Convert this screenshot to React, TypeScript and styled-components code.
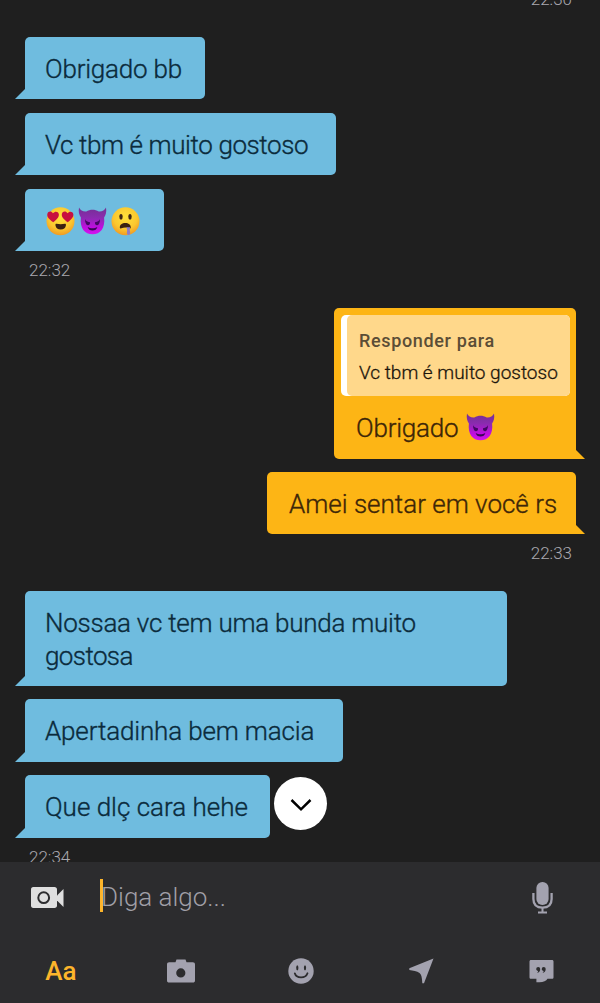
import React from "react";
import styled, { createGlobalStyle } from "styled-components";

const GlobalStyle = createGlobalStyle`
  * { box-sizing: border-box; }
  body {
    margin: 0;
    background: #1f1f1f;
    font-family: Roboto, "Liberation Sans", sans-serif;
  }
`;

const Screen = styled.main`
  display: flex;
  flex-direction: column;
  width: 600px;
  height: 1003px;
  overflow: hidden;
  background: #1f1f1f;
`;

const Conversation = styled.section`
  position: relative;
  display: flex;
  flex-direction: column;
  height: 862px;
  overflow: hidden;
  padding: 0 24px 0 25px;
`;

const Group = styled.div<{ $own?: boolean; $top: number; $gap: number }>`
  display: flex;
  flex-direction: column;
  flex: none;
  align-items: ${(p) => (p.$own ? "flex-end" : "flex-start")};
  gap: ${(p) => p.$gap}px;
  margin-top: ${(p) => p.$top}px;
`;

const Bubble = styled.div<{ $own?: boolean; $width: number; $height?: number }>`
  position: relative;
  display: flex;
  flex-direction: column;
  justify-content: center;
  width: ${(p) => p.$width}px;
  height: ${(p) => p.$height ?? 62}px;
  padding: 0 20px 0 ${(p) => (p.$own ? 22 : 20)}px;
  background: ${(p) => (p.$own ? "#fdb515" : "#6fbcdf")};
  color: ${(p) => (p.$own ? "#3d2608" : "#0b2b3c")};
  border-radius: ${(p) => (p.$own ? "5px 5px 0 5px" : "5px 5px 5px 0")};

  &::after {
    content: "";
    position: absolute;
    bottom: 0;
    ${(p) => (p.$own ? "right: -9px" : "left: -10px")};
    width: 10px;
    height: 10px;
    background: inherit;
    clip-path: ${(p) =>
      p.$own ? "polygon(0 0, 100% 100%, 0 100%)" : "polygon(100% 0, 100% 100%, 0 100%)"};
  }
`;

const Message = styled.span<{ $spacing?: number }>`
  display: block;
  font-size: 26px;
  font-weight: 300;
  line-height: 33px;
  letter-spacing: ${(p) => p.$spacing ?? 0}px;
  -webkit-text-stroke: 0.35px currentColor;
  white-space: nowrap;
  padding-top: 2px;
`;

const MessageLine = styled.span<{ $spacing: number }>`
  display: block;
  letter-spacing: ${(p) => p.$spacing}px;
`;

const EmojiRow = styled.span`
  display: flex;
  gap: 3px;
  padding-top: 1px;
`;

const Time = styled.time<{ $own?: boolean; $top?: number }>`
  display: block;
  flex: none;
  align-self: ${(p) => (p.$own ? "flex-end" : "flex-start")};
  margin: ${(p) => p.$top ?? 9}px 4px 0;
  height: 20px;
  font-size: 17px;
  font-weight: 300;
  line-height: 20px;
  color: #aaa9b0;
`;

const ReplyBubble = styled(Bubble)`
  justify-content: flex-start;
  padding: 7px 6px 0 7px;
`;

const Quote = styled.blockquote`
  margin: 0;
  height: 81px;
  padding-left: 6px;
  border-radius: 5px;
  background: #fff;
`;

const QuoteContent = styled.div`
  height: 81px;
  padding: 10px 0 0 12px;
  border-radius: 5px;
  background: #ffd88b;
`;

const QuoteTitle = styled.div`
  font-size: 18px;
  font-weight: 500;
  line-height: 32px;
  letter-spacing: 0.65px;
  color: #5b4d36;
`;

const QuoteText = styled.div`
  font-size: 19px;
  font-weight: 300;
  line-height: 32px;
  letter-spacing: 0;
  -webkit-text-stroke: 0.3px currentColor;
  white-space: nowrap;
  color: #1c150b;
`;

const ReplyBody = styled.div`
  display: flex;
  align-items: center;
  gap: 8px;
  height: 62px;
  padding-left: 15px;
`;

const ScrollButton = styled.button`
  position: absolute;
  left: 274px;
  top: 777px;
  display: grid;
  place-items: center;
  width: 53px;
  height: 53px;
  padding: 3px 0 0;
  border: 0;
  border-radius: 50%;
  background: #fff;
`;

const Composer = styled.footer`
  display: flex;
  flex-direction: column;
  height: 141px;
  background: #2c2c2e;
`;

const InputRow = styled.div`
  display: flex;
  align-items: center;
  height: 70px;
  padding: 0 46px 0 30px;
`;

const Field = styled.div`
  display: flex;
  align-items: center;
  flex: 1;
  height: 35px;
  margin-left: 36px;
`;

const Caret = styled.span`
  width: 3px;
  height: 33px;
  margin-bottom: 3px;
  background: #fdb52b;
`;

const Placeholder = styled.span`
  margin-left: -2px;
  font-size: 26px;
  font-weight: 300;
  line-height: 33px;
  color: #a09fa7;
`;

const Tools = styled.nav`
  display: grid;
  grid-template-columns: repeat(5, 120px);
  height: 71px;
  padding: 7px 0 0 1px;
`;

const Tool = styled.button`
  display: grid;
  place-items: center;
  padding: 0;
  border: 0;
  background: none;
  color: #a3a2af;
`;

const TextTool = styled.span`
  font: 500 26px/33px Roboto, sans-serif;
  color: #fdb52b;
`;

const HeartEyes = () => (
  <svg width="30" height="30" viewBox="0 0 30 30" role="img" aria-label="heart eyes">
    <defs>
      <radialGradient id="gold" cx=".5" cy=".35" r=".65">
        <stop offset="0" stopColor="#ffe13b" />
        <stop offset=".65" stopColor="#fbc72f" />
        <stop offset="1" stopColor="#f19b24" />
      </radialGradient>
    </defs>
    <circle cx="15.5" cy="15.3" r="14" fill="url(#gold)" />
    <path d="M8.3 16.2C4 13.5 1.6 10.7 2.4 7.8c.7-2.600 4-3 5.500-.5C10 4.800 13.200 5.300 13.800 8c.6 3-2.200 5.700-5.500 8.200Z" fill="#c8103f" />
    <path d="M22.800 16.200c-4.300-2.700-6.600-5.500-5.900-8.400.7-2.600 4.100-3 5.500-.5C24.300 4.800 27.700 5.300 28.300 8c.6 3-2.200 5.700-5.500 8.200Z" fill="#c8103f" />
    <path d="M11.500 17.800c2.700.6 5.700.6 8.400 0 1 0 1.200.7 1 1.600-.4 2.700-2.200 4.100-5.200 4.100s-4.800-1.400-5.200-4.100c-.2-.9 0-1.600 1-1.600Z" fill="#3b2111" />
  </svg>
);

const Devil = () => (
  <svg width="29" height="30" viewBox="0 0 29 30" role="img" aria-label="smiling devil">
    <defs>
      <linearGradient id="devil" x1="0" y1="0" x2="0" y2="1">
        <stop offset="0" stopColor="#743094" />
        <stop offset=".38" stopColor="#8b2bb0" />
        <stop offset=".75" stopColor="#bf0de0" />
        <stop offset="1" stopColor="#d414ee" />
      </linearGradient>
    </defs>
    <path d="M1 1.500c1.500 3 4 4.300 7.300 4C12 3.300 17 3.300 20.700 5.500 24 5.800 26.500 4.500 28 1.500c.8 4.500-.2 7.700-1.900 9.900 1.300 10.600-3.800 16.900-11.600 16.900S1.600 22 2.900 11.400C1.200 9.200.2 6 1 1.500Z" fill="url(#devil)" />
    <path d="M7 13c.3 1.500 2 2.700 5 3.200.3 2-1 3.200-2.300 3C8.100 19 7 16.500 7 13ZM22 13c-.3 1.500-2 2.700-5 3.200-.3 2 1 3.200 2.300 3C20.900 19 22 16.500 22 13Z" fill="#420763" />
    <path d="M9.700 21c2.800 1.700 6.800 1.700 9.600 0-.5 2.500-2.300 3.500-4.800 3.500S10.200 23.500 9.700 21Z" fill="#390657" />
  </svg>
);

const Drooling = () => (
  <svg width="30" height="30" viewBox="0 0 30 30" role="img" aria-label="drooling">
    <circle cx="15.500" cy="15.300" r="14" fill="url(#gold)" />
    <ellipse cx="11" cy="10.800" rx="1.700" ry="2.900" fill="#402716" />
    <ellipse cx="20" cy="10.800" rx="1.700" ry="2.900" fill="#402716" />
    <path d="M9.800 21.500c0-2.900 2.300-4.500 5.500-4.500s5.500 1.600 5.500 4.500c0 1-.7 1.200-1.600.8-2.500-1-5.300-1-7.800 0-.9.4-1.600.2-1.600-.8Z" fill="#3b2111" />
    <path d="M16.200 21.300h4c-.6 1.800-.5 3.100-.1 4.800.4 2-.4 3-1.600 3-1.400 0-1.800-1.400-1.500-3 .4-2 .1-3.200-.8-4.800Z" fill="#8d7cc9" />
  </svg>
);

const VideoIcon = () => (
  <svg width="34" height="23" viewBox="0 0 34 23" aria-hidden="true">
    <path d="M3.300 1h21.200c1.500 0 2.500 1 2.500 2.500v16c0 1.500-1 2.500-2.500 2.500H3.300C1.800 22 1 21 1 19.500v-16C1 2 1.800 1 3.300 1Z" fill="#dfdfdf" />
    <path d="M27 9.500 33.500 3v18L27 14.500Z" fill="#dfdfdf" />
    <circle cx="13.700" cy="11.700" r="5.400" fill="none" stroke="#2c2c2e" strokeWidth="2" />
  </svg>
);

const MicIcon = () => (
  <svg width="23" height="34" viewBox="0 -1 23 34" aria-hidden="true">
    <rect x="5.400" y="1" width="12.200" height="23" rx="6" fill="#a3a2af" />
    <path d="M2.400 12v6c0 5.700 3.600 8.600 9.100 8.600s9.100-2.900 9.100-8.600v-6" fill="none" stroke="#a3a2af" strokeWidth="2.300" />
    <path d="M11.500 27v4M7 31.500h9" fill="none" stroke="#a3a2af" strokeWidth="2" />
  </svg>
);

const CameraIcon = () => (
  <svg width="28" height="24" viewBox="0 0 28 24" aria-hidden="true">
    <path fillRule="evenodd" fill="currentColor" d="M9.500.500h9l1 2.700h6.300c1.400 0 2.200.8 2.200 2.200v16c0 1.400-.8 2.200-2.200 2.200H2.200C.8 23.600 0 22.800 0 21.400v-16C0 4 .8 3.200 2.200 3.200h6.300ZM13.800 9.300a4.600 4.600 0 1 0 0 9.200 4.600 4.600 0 0 0 0-9.200Z" />
  </svg>
);

const SmileIcon = () => (
  <svg width="26" height="26" viewBox="0 0 26 26" aria-hidden="true">
    <circle cx="13" cy="13" r="12.700" fill="currentColor" />
    <ellipse cx="9.300" cy="9.800" rx="1.100" ry="2.600" fill="#2c2c2e" />
    <ellipse cx="17" cy="9.800" rx="1.100" ry="2.600" fill="#2c2c2e" />
    <path d="M6.800 15.300c1.500 5.400 10.700 5.700 12.700 0" fill="none" stroke="#2c2c2e" strokeWidth="1.800" strokeLinecap="round" />
  </svg>
);

const SendIcon = () => (
  <svg width="25" height="26" viewBox="0 0 25 26" aria-hidden="true">
    <path d="M24.500.500 15 25.300h-1.700c-.2-5.300-.8-9-2.800-10.400C8 13.200 4 12.800.300 12v-1.700Z" fill="currentColor" />
  </svg>
);

const PhrasesIcon = () => (
  <svg width="25" height="24" viewBox="0 0 25 24" aria-hidden="true">
    <path d="M2 1h21c1 0 1.500.6 1.500 1.500v15.700c0 1-.5 1.500-1.500 1.500h-4.500c-1.200 2.200-4 3.500-8 3.500H7.400v-3.500H2c-1 0-1.500-.5-1.500-1.500V2.500C.5 1.600 1 1 2 1Z" fill="currentColor" />
    <path d="M7.200 10a2 2 0 1 1 4 0c0 2.200-1.200 3.600-3.200 4 .8-.8 1.200-1.500 1.100-2.100-1.100 0-1.900-.8-1.900-1.900ZM12.700 10a2 2 0 1 1 4 0c0 2.200-1.200 3.600-3.200 4 .8-.8 1.200-1.500 1.100-2.100-1.100 0-1.900-.8-1.900-1.900Z" fill="#2c2c2e" />
  </svg>
);

export default function App() {
  return (
    <>
      <GlobalStyle />
      <Screen>
        <Conversation>
          <Time $own $top={-11}>22:30</Time>
          <Group $top={28} $gap={14}>
            <Bubble $width={180}><Message $spacing={-0.2}>Obrigado bb</Message></Bubble>
            <Bubble $width={311}><Message $spacing={-0.4}>Vc tbm é muito gostoso</Message></Bubble>
            <Bubble $width={139}>
              <EmojiRow><HeartEyes /><Devil /><Drooling /></EmojiRow>
            </Bubble>
          </Group>
          <Time>22:32</Time>

          <Group $own $top={28} $gap={13}>
            <ReplyBubble $own $width={242} $height={151}>
              <Quote>
                <QuoteContent>
                  <QuoteTitle>Responder para</QuoteTitle>
                  <QuoteText>Vc tbm é muito gostoso</QuoteText>
                </QuoteContent>
              </Quote>
              <ReplyBody><Message $spacing={-0.2}>Obrigado</Message><Devil /></ReplyBody>
            </ReplyBubble>
            <Bubble $own $width={309}><Message>Amei sentar em você rs</Message></Bubble>
          </Group>
          <Time $own>22:33</Time>

          <Group $top={28} $gap={13}>
            <Bubble $width={482} $height={95}>
              <Message>
                <MessageLine $spacing={-0.25}>Nossaa vc tem uma bunda muito</MessageLine>
                <MessageLine $spacing={-0.6}>gostosa</MessageLine>
              </Message>
            </Bubble>
            <Bubble $width={318} $height={63}><Message $spacing={-0.15}>Apertadinha bem macia</Message></Bubble>
            <Bubble $width={245} $height={63}><Message>Que dlç cara hehe</Message></Bubble>
          </Group>
          <Time>22:34</Time>

          <ScrollButton aria-label="Descer">
            <svg width="24" height="16" viewBox="0 0 24 16" aria-hidden="true">
              <path d="m2.500 3 9.500 9.300L21.500 3" fill="none" stroke="#000" strokeWidth="2.500" />
            </svg>
          </ScrollButton>
        </Conversation>

        <Composer>
          <InputRow>
            <VideoIcon />
            <Field><Caret /><Placeholder>Diga algo...</Placeholder></Field>
            <MicIcon />
          </InputRow>
          <Tools>
            <Tool><TextTool>Aa</TextTool></Tool>
            <Tool aria-label="Foto"><CameraIcon /></Tool>
            <Tool aria-label="Emoji"><SmileIcon /></Tool>
            <Tool aria-label="Local"><SendIcon /></Tool>
            <Tool aria-label="Frases"><PhrasesIcon /></Tool>
          </Tools>
        </Composer>
      </Screen>
    </>
  );
}
